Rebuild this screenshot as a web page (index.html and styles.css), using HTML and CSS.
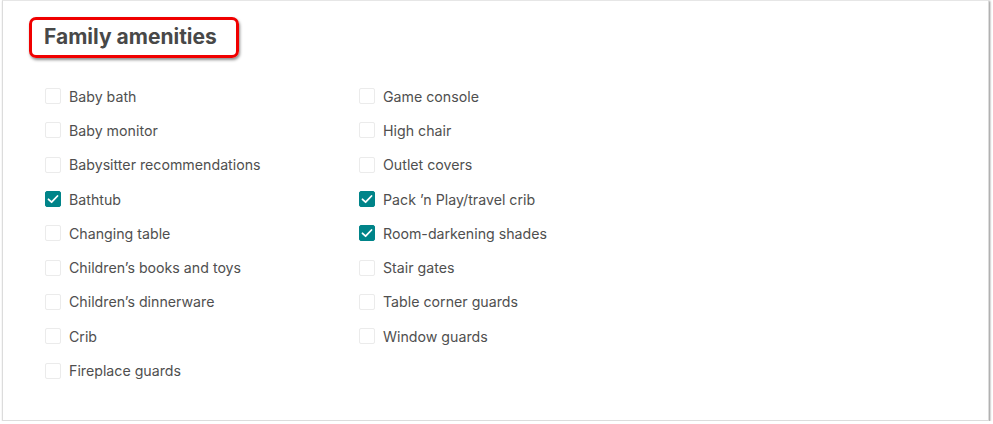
FILE: index.html
```html
<!DOCTYPE html>
<html>
<head>
<meta charset="utf-8">
<link rel="stylesheet" href="styles.css">
</head>
<body>
<div class="card">
  <div class="title-wrap"><h2 class="title">Family amenities</h2></div>
  <div class="cols">
    <ul class="col">
      <li class="item"><span class="box"></span>Baby bath</li>
      <li class="item"><span class="box"></span>Baby monitor</li>
      <li class="item"><span class="box"></span>Babysitter recommendations</li>
      <li class="item"><span class="box checked"><svg viewBox="0 0 16 16" width="16" height="16"><path d="M3.5 8.3 L6.6 11.2 L12.5 5" fill="none" stroke="#fff" stroke-width="1.8" stroke-linecap="round" stroke-linejoin="round"/></svg></span>Bathtub</li>
      <li class="item"><span class="box"></span>Changing table</li>
      <li class="item"><span class="box"></span>Children’s books and toys</li>
      <li class="item"><span class="box"></span>Children’s dinnerware</li>
      <li class="item"><span class="box"></span>Crib</li>
      <li class="item"><span class="box"></span>Fireplace guards</li>
    </ul>
    <ul class="col">
      <li class="item"><span class="box"></span>Game console</li>
      <li class="item"><span class="box"></span>High chair</li>
      <li class="item"><span class="box"></span>Outlet covers</li>
      <li class="item"><span class="box checked"><svg viewBox="0 0 16 16" width="16" height="16"><path d="M3.5 8.3 L6.6 11.2 L12.5 5" fill="none" stroke="#fff" stroke-width="1.8" stroke-linecap="round" stroke-linejoin="round"/></svg></span>Pack ’n Play/travel crib</li>
      <li class="item"><span class="box checked"><svg viewBox="0 0 16 16" width="16" height="16"><path d="M3.5 8.3 L6.6 11.2 L12.5 5" fill="none" stroke="#fff" stroke-width="1.8" stroke-linecap="round" stroke-linejoin="round"/></svg></span>Room-darkening shades</li>
      <li class="item"><span class="box"></span>Stair gates</li>
      <li class="item"><span class="box"></span>Table corner guards</li>
      <li class="item"><span class="box"></span>Window guards</li>
    </ul>
  </div>
</div>
</body>
</html>
```
FILE: styles.css
```css
html, body {
  margin: 0;
  padding: 0;
  background: #fff;
}
body {
  font-family: "Inter", "Noto Sans", sans-serif;
  color: #484848;
}
.card {
  margin-left: 2px;
  width: 987px;
  height: 421px;
  box-sizing: border-box;
  border: 1px solid #dcdcdc;
  border-top-color: #e6e6e6;
  box-shadow: 1px 1px 2px rgba(0,0,0,0.45);
  background: #fff;
  padding: 16px 0 0 26px;
}
.title-wrap {
  display: inline-block;
  border: 3px solid #f00000;
  border-radius: 7px;
  box-shadow: 1px 2px 3px rgba(0,0,0,0.45);
  padding: 4px 19px 5px 12px;
}
.title {
  margin: 0;
  font-size: 21px;
  font-weight: 700;
  line-height: 26px;
  color: #484848;
}
.cols {
  display: flex;
  margin-top: 21px;
  margin-left: 16px;
}
.col {
  list-style: none;
  margin: 0;
  padding: 0;
  width: 314px;
}
.item {
  display: flex;
  align-items: center;
  height: 34.3px;
  font-size: 14.2px;
  color: #4f4f4f;
}
.box {
  width: 16px;
  height: 16px;
  box-sizing: border-box;
  border: 1px solid #ebebeb;
  border-radius: 2px;
  margin-right: 8px;
  flex: none;
  display: flex;
  align-items: center;
  justify-content: center;
}
.box.checked {
  background: #008489;
  border-color: #008489;
}
.box svg {
  display: block;
  margin: -1px;
}
```
